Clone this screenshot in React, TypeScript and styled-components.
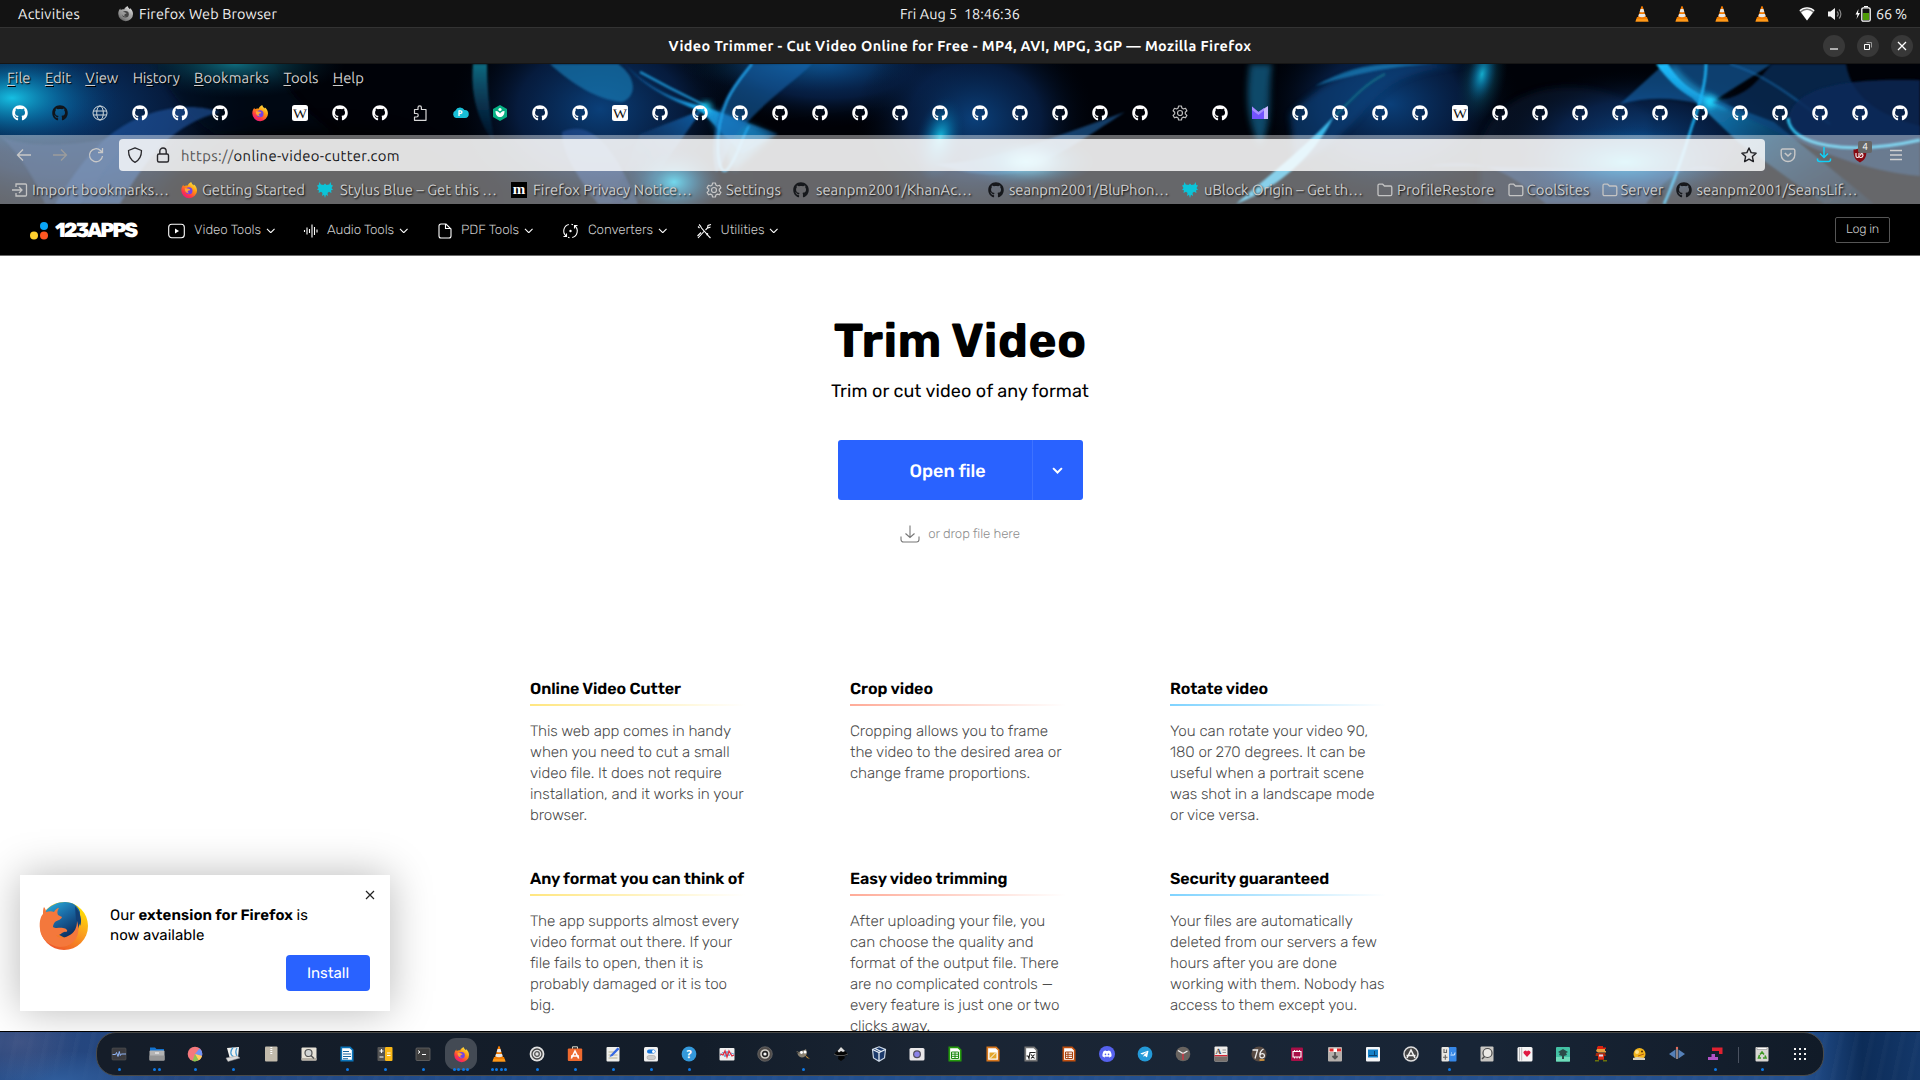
import React, { ReactNode, useLayoutEffect, useRef, useState } from 'react';
import styled, { createGlobalStyle } from 'styled-components';
import { FaGithub, FaDiscord, FaTelegramPlane } from 'react-icons/fa';

const ui = '"Ubuntu", "Open Sans", "Noto Sans", sans-serif';
const web = '"Rubik", "Inter", "Roboto", sans-serif';

const Global = createGlobalStyle`
  * { box-sizing: border-box; }
  body { margin: 0; overflow: hidden; background: #fff; text-rendering: geometricPrecision; }
  h1, h2, p { margin: 0; }
  svg { display: block; flex: none; }
`;

/* ---------- text spread to a known measure ---------- */
const Run = styled.span`
  display: inline-block;
  flex: none;
  white-space: pre;
`;

function Fit({ w, children }: { w: number; children: ReactNode }) {
  const ref = useRef<HTMLSpanElement>(null);
  const [spacing, setSpacing] = useState(0);
  useLayoutEffect(() => {
    const el = ref.current;
    if (!el) return;
    el.style.letterSpacing = '0px';
    const natural = el.getBoundingClientRect().width;
    const value = (w - natural) / (el.textContent || ' ').length;
    el.style.letterSpacing = value + 'px';
    setSpacing(value);
  }, [w]);
  return <Run ref={ref} style={{ letterSpacing: spacing }}>{children}</Run>;
}

/* ---------- shared icons ---------- */
const Svg = styled.svg.attrs({ fill: 'none' })<{ $s?: number }>`
  width: ${(p) => p.$s ?? 16}px;
  height: ${(p) => p.$s ?? 16}px;
  overflow: visible;
`;

const Firefox = ({ s = 16, mono }: { s?: number; mono?: boolean }) => (
  <Svg viewBox="0 0 16 16" $s={s}>
    <defs>
      <linearGradient id={mono ? 'fxm' : 'fxc'} x1="0.85" y1="0" x2="0.2" y2="1">
        <stop offset="0" stopColor={mono ? '#eee' : '#fff44f'} />
        <stop offset="0.4" stopColor={mono ? '#aaa' : '#ff980e'} />
        <stop offset="0.75" stopColor={mono ? '#888' : '#ff3647'} />
        <stop offset="1" stopColor={mono ? '#555' : '#e31587'} />
      </linearGradient>
    </defs>
    <path d="M10.2 0c.3 1.600 1.500 2.300 2.500 3.400.2-.5.1-.9 0-1.200C14.800 3.900 16 6 16 8.400A7.800 7.600 0 0 1 .3 8.600C.2 6 1.200 4 2.500 2.700c0 .7.100 1.200.4 1.500C4 3.500 5.500 3.300 6.600 3.700 7.200 2 8.600.8 10.200 0z" fill={mono ? 'url(#fxm)' : 'url(#fxc)'} />
    <circle cx="8" cy="8.800" r="3.500" fill={mono ? '#444' : '#7542e5'} />
    <path d="M3.800 6.500c1.400-.7 2.800-.1 3.900.3 1 .4 1.600.5 1.500 1C9 8.500 7.800 8.400 7 9c-.8.700-.1 1.900 1.400 1.900-2 1-4.800-.8-4.600-4.400z" fill={mono ? '#999' : '#ffa436'} />
  </Svg>
);

const Vlc = ({ s = 16 }: { s?: number }) => (
  <Svg viewBox="0 0 16 16" $s={s}>
    <path d="M3 11h10l1.500 4.600h-13z" fill="#f08000" />
    <path d="M2.400 13.200h11.200l.9 2.400h-13z" fill="#ff9a1a" />
    <path d="M7.300.2h1.400l3.300 11.200c-2 1.700-6 1.700-8 0z" fill="#f27a00" />
    <path d="M6.600 2.900h2.800l.9 2.900c-1.300.7-3.300.7-4.600 0zM5 8h6l.7 2.300c-2 1.300-5.400 1.300-7.400 0z" fill="#e8e8e8" />
  </Svg>
);

const Gear = ({ c = '#c8c8c8' }: { c?: string }) => (
  <Svg viewBox="0 0 16 16" stroke={c} strokeWidth="1.200">
    <path strokeLinejoin="round" d="M6.600 1h2.800l.5 2.100 1.500.9 2.100-.7 1.400 2.400-1.600 1.500v1.700l1.600 1.500-1.400 2.400-2.100-.7-1.500.9L9.400 15H6.600l-.5-2-1.500-.9-2.100.7-1.400-2.400 1.600-1.500V7.200L1.100 5.700l1.400-2.400 2.100.7 1.500-.9z" />
    <circle cx="8" cy="8" r="2.500" />
  </Svg>
);

const Wiki = () => (
  <Svg viewBox="0 0 16 16">
    <rect width="16" height="16" rx="2.500" fill="#fff" />
    <text x="8" y="12.500" textAnchor="middle" fontFamily="Liberation Serif, serif" fontSize="13" fill="#111" textLength="14" lengthAdjust="spacingAndGlyphs">W</text>
  </Svg>
);

const Splat = () => (
  <Svg viewBox="0 0 16 16">
    <path d="M2.500 0l1.300 2.500L6.500 3 8 1.500 9.500 3l2.700-.5L13.500 0l.8 3L16 3.500 14.500 6l1.500 2-2 .3.500 2.700-2.500-1.200L10.500 11l.5 3-2-1.200L8 16l-1-3.200L5 14l.5-3L4 9.800 1.500 11 2 8.300 0 8l1.500-2L0 3.500 1.700 3z" fill="#0cc4d8" />
  </Svg>
);

const Folder = () => (
  <Svg viewBox="0 0 16 16" stroke="#c4c4c4" strokeWidth="1.300">
    <path d="M1 3.500A1.300 1.300 0 0 1 2.300 2.200h3.400L7.500 4h6a1.300 1.300 0 0 1 1.300 1.300v7a1.300 1.300 0 0 1-1.300 1.300H2.300A1.300 1.300 0 0 1 1 12.300z" />
  </Svg>
);

/* ---------- system bar ---------- */
const Screen = styled.div`
  width: 1920px;
  height: 1080px;
  display: flex;
  flex-direction: column;
  overflow: hidden;
  font-family: ${ui};
`;

const SystemBar = styled.header`
  display: grid;
  grid-template-columns: 1fr auto 1fr;
  align-items: center;
  height: 27px;
  background: #131313;
  color: #f0f0f0;
  font-size: 14.400px;
  line-height: 26px;
`;

const SystemLeft = styled.div`
  display: flex;
  align-items: center;
  padding-left: 18px;
`;

const AppMenu = styled.div`
  display: flex;
  align-items: center;
  gap: 6px;
  margin-left: 38px;
`;

const SystemRight = styled.div`
  display: flex;
  align-items: center;
  justify-content: flex-end;
  padding-right: 13px;
`;

const Cones = styled.div`
  display: flex;
  gap: 24px;
  margin-right: 29px;
`;

const StatusIcons = styled.div`
  display: flex;
  align-items: center;
  gap: 12px;
  margin-right: 5px;
`;

const TitleBar = styled.div`
  display: grid;
  grid-template-columns: 1fr auto 1fr;
  align-items: center;
  height: 37px;
  background: #222;
  border-top: 1px solid #333;
  border-bottom: 1px solid #161616;
  color: #fff;
  font-size: 14.400px;
  font-weight: 700;
`;

const WindowButtons = styled.div`
  grid-column: 3;
  display: flex;
  justify-content: flex-end;
  gap: 12px;
  padding-right: 7px;
`;

const WindowButton = styled.div`
  display: grid;
  place-items: center;
  width: 22px;
  height: 22px;
  border-radius: 50%;
  background: #383838;
`;

const Title = styled.div`
  grid-column: 2;
`;

/* ---------- browser chrome ---------- */
const Chrome = styled.div`
  position: relative;
  height: 140px;
  display: flex;
  flex-direction: column;
  background: #000208;
  color: #cfcfcf;
  overflow: hidden;
`;

const Art = styled.svg`
  position: absolute;
  inset: 0;
  width: 1920px;
  height: 140px;
`;

const MenuRow = styled.nav`
  position: relative;
  display: flex;
  align-items: center;
  gap: 14.400px;
  height: 27px;
  padding-left: 7px;
  font-size: 14.800px;
  text-shadow: 1px 1px 1px #000;
  line-height: 20px;

  u { text-underline-offset: 2px; }
`;

const TabRow = styled.div`
  position: relative;
  display: flex;
  height: 44px;
`;

const Tab = styled.div<{ $dark?: boolean }>`
  display: grid;
  place-items: center;
  width: 40px;
  height: 44px;
  color: ${(p) => (p.$dark ? '#10141a' : '#fff')};
`;

const Toolbars = styled.div`
  position: relative;
  display: flex;
  flex-direction: column;
  height: 69px;
  background: rgba(255, 255, 255, 0.4);
`;

const AddressRow = styled.div`
  display: flex;
  align-items: center;
  height: 40px;
  padding: 0 16px;
`;

const NavButtons = styled.div`
  display: flex;
  align-items: center;
  gap: 20px;
  width: 103px;
`;

const UrlField = styled.div`
  display: flex;
  align-items: center;
  width: 1646px;
  height: 32px;
  padding: 0 8px;
  border-radius: 4px;
  background: rgba(255, 255, 255, 0.8);
  color: #16161a;
  font-size: 14.800px;
`;

const UrlText = styled.div`
  margin-left: 10px;
  flex: 1;

  span span { color: #555; }
`;

const Gap = styled.span<{ $w: number }>`
  flex: none;
  width: ${(p) => p.$w}px;
`;

const Actions = styled.div`
  display: flex;
  align-items: center;
  gap: 20px;
  margin-left: 15px;
`;

const Badged = styled.div`
  position: relative;
`;

const Badge = styled.span`
  position: absolute;
  left: 6px;
  top: -6px;
  width: 14px;
  height: 12px;
  border-radius: 2px;
  background: #666;
  color: #fff;
  font-size: 10px;
  line-height: 12px;
  text-align: center;
`;

const Bookmarks = styled.div`
  display: flex;
  align-items: center;
  height: 29px;
  font-size: 14.800px;
  color: #d0d0d0;
  text-shadow: 1px 1px 2px #000;
  line-height: 28px;
`;

const Bookmark = styled.div<{ $ml: number; $gap: number }>`
  display: flex;
  align-items: center;
  gap: ${(p) => p.$gap}px;
  margin-left: ${(p) => p.$ml}px;
`;

const InkMark = styled(FaGithub)`
  color: #16181c;
`;

/* ---------- web page ---------- */
const Page = styled.main`
  position: relative;
  height: 827px;
  background: #fff;
  overflow: hidden;
  font-family: ${web};
`;

const SiteNav = styled.nav`
  display: flex;
  align-items: center;
  height: 52px;
  padding: 0 30px;
  background: #000;
  border-bottom: 1px solid #6a6a6a;
  color: #ccc;
  font-size: 13.300px;
  font-weight: 300;
`;

const Logo = styled.div`
  display: flex;
  align-items: center;
  gap: 7px;
  width: 138px;
  padding-top: 2px;
  color: #fff;
  font-size: 20.500px;
  font-weight: 800;
`;

const NavItem = styled.div<{ $mr: number }>`
  display: flex;
  align-items: center;
  padding-top: 2px;
  margin-right: ${(p) => p.$mr}px;
`;

const LogIn = styled.div`
  display: grid;
  place-items: center;
  width: 55px;
  height: 26px;
  margin-left: auto;
  border: 1px solid #555;
  border-radius: 2px;
  font-size: 12.500px;
`;

const Hero = styled.section`
  display: flex;
  flex-direction: column;
  align-items: center;
  padding-top: 56px;
`;

const HeroTitle = styled.h1`
  font-size: 48px;
  line-height: 58px;
  font-weight: 700;
  color: #000;
`;

const HeroSub = styled.p`
  margin-top: 9px;
  font-size: 18px;
  line-height: 24px;
  color: #000;
`;

const OpenButton = styled.div`
  display: flex;
  width: 245px;
  height: 60px;
  margin-top: 37px;
  border-radius: 3px;
  background: #2962ff;
  color: #fff;
  font-size: 18px;
  font-weight: 500;
`;

const OpenLabel = styled.div`
  display: flex;
  align-items: center;
  width: 195px;
  padding: 2px 0 0 72px;
  border-right: 1px solid #3e72ff;
`;

const OpenMore = styled.div`
  flex: 1;
  display: grid;
  place-items: center;
  padding-top: 1px;
`;

const Drop = styled.div`
  display: flex;
  align-items: center;
  gap: 8px;
  height: 20px;
  margin-top: 24px;
  color: #8e8e8e;
  font-size: 13.200px;
  font-weight: 300;
`;

const Features = styled.section`
  display: grid;
  grid-template-columns: repeat(3, 320px);
  grid-auto-rows: 189.500px;
  margin: 134px 0 0 530px;
`;

const Feature = styled.article`
  width: 220px;
`;

const FeatureTitle = styled.h2<{ $c: string }>`
  height: 28px;
  font-size: 16px;
  line-height: 21px;
  font-weight: 600;
  color: #000;
  background: linear-gradient(90deg, ${(p) => p.$c}, #fff 216px) left bottom / 216px 2px no-repeat;
`;

const Lines = styled.p`
  display: flex;
  flex-direction: column;
  align-items: flex-start;
  margin-top: 15.400px;
  color: #4c4c4c;
  font-size: 15.200px;
  line-height: 21px;
  font-weight: 300;
`;

const Popup = styled.aside`
  position: absolute;
  left: 20px;
  top: 671px;
  display: flex;
  width: 370px;
  height: 136px;
  padding: 27px 20px 20px;
  background: #fff;
  box-shadow: 0 0 40px rgba(0, 0, 0, 0.28);
`;

const PopupBody = styled.div`
  display: flex;
  flex-direction: column;
  flex: 1;
  margin-left: 22px;
  padding-top: 3px;
  font-size: 15px;
  line-height: 20px;
  color: #000;

  b { font-weight: 600; }
`;

const Phrase = styled.div`
  display: flex;
  gap: 3.500px;
`;

const Install = styled.div`
  display: grid;
  place-items: center;
  align-self: flex-end;
  width: 84px;
  height: 36px;
  margin-top: 10px;
  border-radius: 4px;
  background: #2962ff;
  color: #fff;
  font-weight: 400;
`;

const PopupClose = styled.div`
  position: absolute;
  right: 15px;
  top: 15px;
`;

/* ---------- dock ---------- */
const Desktop = styled.footer`
  height: 49px;
  padding-left: 96px;
  border-top: 1px solid #000;
  background:
    radial-gradient(ellipse 60px 40px at 20px 10px, #55608c88, transparent),
    radial-gradient(ellipse 120px 30px at 60px 49px, #2f5d9c, transparent),
    repeating-linear-gradient(102deg, #ffffff05 0 3px, transparent 6px 15px),
    linear-gradient(90deg, #26457c, #1f4e8f 30%, #23508f 60%, #24508e 94%, #0c2c58 97%, #14386a);
`;

const Dock = styled.div`
  display: flex;
  align-items: flex-start;
  width: 1728px;
  height: 44px;
  padding: 0 3px;
  border: 1px solid #4a4a48;
  border-radius: 20px;
  background: linear-gradient(90deg, #151d29, #131d2a 35%, #1a2534 50%, #182536 80%, #111b28);
`;

const DockItem = styled.div<{ $on?: boolean }>`
  display: flex;
  flex-direction: column;
  align-items: center;
  flex: none;
  width: 38px;
  height: 42px;

  & > div:first-child {
    display: grid;
    place-items: center;
    width: 32px;
    height: 32px;
    margin-top: 5px;
    border-radius: 11px;
    background: ${(p) => (p.$on ? '#434a54' : 'transparent')};
  }
`;

const Dots = styled.div`
  display: flex;
  gap: 1.500px;
  margin-top: -2px;

  i {
    width: 3px;
    height: 3px;
    border-radius: 50%;
    background: #0d78e6;
  }
`;

const Divider = styled.div`
  width: 1px;
  height: 16px;
  margin: 14px 4px 0;
  background: #4a5260;
`;

const TileText = ({ x = 8, y = 12, size = 10, c = '#fff', children }: { x?: number; y?: number; size?: number; c?: string; children: string }) => (
  <text x={x} y={y} fontSize={size} fontWeight="700" textAnchor="middle" fill={c} fontFamily="Open Sans, sans-serif">{children}</text>
);

const sheet = (edge: string, inner: ReactNode) => (
  <>
    <path d="M2.300 1.300h8.700l2.700 2.700v10.700H2.300z" fill="#fff" stroke={edge} strokeWidth="1.700" />
    {inner}
  </>
);

const dock: { n?: number; on?: boolean; art: ReactNode }[] = [
  { n: 1, art: <><rect x="1" y="2" width="14" height="12" rx="1" fill="#3b3b3f" stroke="#555" strokeWidth=".6" /><path d="M1.500 8.500h3l1-2 1.500 4 1.300-5 1 4 1-1.500H15" stroke="#8fb4f5" /></> },
  { n: 2, art: <><path d="M1 3V1.500h5L7.500 3H15v3H1z" fill="#1473cf" /><rect x=".5" y="4.500" width="15" height="10" rx="1" fill="#b4b4b4" /><path d="M.5 9.500h15v5H.5z" fill="#969696" /><path d="M6 7h4" stroke="#fff" /></> },
  { n: 1, art: <><circle cx="8" cy="8" r="7.300" fill="#f5797e" /><path d="M8 8l4.500-5.500A7.300 7.300 0 0 1 15 10z" fill="#7295f5" /><path d="M8 8l7 2a7 7 0 0 1-3.500 4.300z" fill="#ffd25e" /><path d="M8 8l3.500 6.300A7 7 0 0 1 5.500 15z" fill="#8cc751" /></> },
  { n: 1, art: <><path d="M2 2l12-1-1 11-8 1z" fill="#f3f3ef" /><path d="M8 1.500C5 5 5 9 8.500 10.500M12 2c-2 3-1 6 0 8" stroke="#4a9bd1" strokeWidth="1.300" /><path d="M1 12l11-2 3 2-12 3.500z" fill="#ddd" stroke="#999" strokeWidth=".5" /></> },
  { art: <><rect x="2" y=".5" width="12.500" height="15" rx="1" fill="#c2bbac" /><path d="M8.300 1v8" stroke="#fff" strokeWidth="2" strokeDasharray="1 1" /></> },
  { art: <><rect x=".5" y="1.500" width="15" height="13" rx="1" fill="#e7e2d7" /><path d="M.5 12h15v2.500H.5z" fill="#b7b1a6" /><circle cx="7.500" cy="7" r="3.500" fill="#d2d5d5" stroke="#555" strokeWidth="1.200" /><path d="M10 9.500l3 3" stroke="#555" strokeWidth="1.500" /></> },
  { n: 1, art: sheet('#0b74ba', <path d="M4 5.500h6M4 8h8M4 10.500h8M4 12.800h5" stroke="#14649f" strokeWidth="1.100" />) },
  { n: 1, art: <><rect x=".5" y="1" width="8" height="14" rx="1" fill="#555" /><rect x="8" y="1" width="7.500" height="14" rx="1" fill="#fbb917" /><path d="M2.500 5h4M4.500 3v4M2.500 11h4M10 7h3.500M10 9.500h3.500" stroke="#fff" strokeWidth="1.100" /></> },
  { n: 1, art: <><rect x="1" y="2" width="14" height="12.500" rx="1" fill="#3e3e3e" stroke="#666" strokeWidth=".8" /><path d="M3 4.500l2 1.500-2 1.500M7 8.500h4" stroke="#fff" /></> },
  { n: 4, on: true, art: null },
  { n: 4, art: null },
  { n: 1, art: <><circle cx="8" cy="8" r="7.400" fill="#e2e2e2" /><circle cx="8" cy="8" r="5" stroke="#444" strokeWidth="1.300" /><circle cx="8" cy="8" r="2.300" stroke="#555" strokeWidth="1.300" /></> },
  { n: 1, art: <><path d="M5.500 3V.8h5V3" stroke="#ddc" /><rect x=".8" y="2.500" width="14.400" height="12.500" rx="1" fill="#ee6a2f" /><path d="M4.300 12.500L8 5l3.700 7.500M4 10h8" stroke="#fff" strokeWidth="1.600" /></> },
  { n: 1, art: <><rect x="1.500" y="1" width="13" height="14.500" rx="1" fill="#efefec" /><path d="M3.500 6h6M3.500 9h9M3.500 12h9" stroke="#b9b293" /><path d="M5.500 9l7-7.500L14.500 3 7.500 10l-3 1z" fill="#3467e3" /></> },
  { n: 1, art: <><rect x="1" y="1" width="14" height="14.500" rx="1.500" fill="#f1f1f1" /><rect x="4" y="3.500" width="8.500" height="4" rx="2" fill="#1777dc" /><circle cx="10.500" cy="5.500" r="1.500" fill="#fff" /><rect x="4" y="9.500" width="8.500" height="4" rx="2" fill="#ccc" stroke="#999" strokeWidth=".5" /></> },
  { n: 1, art: <><circle cx="8" cy="8" r="7.400" fill="#3499db" /><TileText y={12} size={11}>?</TileText></> },
  { art: <><rect x=".5" y="2" width="15" height="12.500" rx="1" fill="#efefef" /><path d="M1 10l3-4 2 5 2-6 2 5 2-3 3 1" stroke="#6ba7d8" /><path d="M1 8l3 1 2-4 2 6 2-6 3 5 2-1" stroke="#df2b41" strokeWidth="1.300" /></> },
  { art: <><circle cx="8" cy="8" r="7.300" fill="#4f4b49" stroke="#777" strokeWidth=".6" /><circle cx="8" cy="8" r="4" fill="#222" stroke="#d2cfc8" strokeWidth="1.600" /><circle cx="8" cy="8" r="1.600" fill="#f5f5f5" /></> },
  { n: 1, art: <><path d="M1.500 5L4 6c2-2 5-1 7-3l1 4c-1 5-7 6-9 2z" fill="#877f70" /><path d="M9 8l6 5-3-1z" fill="#c78e33" /><circle cx="6.500" cy="6.500" r="1.400" fill="#fff" /><circle cx="10" cy="6" r="1.500" fill="#fff" /><path d="M.8 6h2.500v2z" fill="#333" /></> },
  { art: <><path d="M8 1l7 7-2 2-2 .5L12 12l-4 3-3-2 .5-2.500L1 8z" fill="#050505" /><path d="M8 1l4 4-2 1-2-1-2 1.500L4.500 5z" fill="#ddd" /><path d="M1 8l3 1.500h7L15 8" stroke="#777" strokeWidth=".7" /></> },
  { art: <><path d="M8 .8l6.500 2.700-1 8.500L8 15.300 2.500 12l-1-8.500z" fill="#1c3a6b" stroke="#cad6e5" strokeWidth="1.200" /><path d="M1.500 3.500L8 6.500l6.500-3M8 6.500v8.500M4 2.500l6 3" stroke="#e7eef5" strokeWidth="1.300" /></> },
  { art: <><rect x=".5" y="2" width="15" height="12.500" rx="1.500" fill="#e9e7e9" /><circle cx="8" cy="8.300" r="4" fill="#55505f" /><circle cx="8" cy="8.300" r="2.700" fill="#8c83e8" /></> },
  { art: sheet('#249a0b', <path d="M4.500 6h7v6.500h-7zM4.500 8.200h7M4.500 10.300h7M8 6v6.500" stroke="#1c8a10" strokeWidth="1" />) },
  { art: sheet('#d7761c', <><rect x="4.500" y="6.500" width="7" height="6" fill="#e3a62a" /><path d="M5 12.500l6-6" stroke="#fff" /></>) },
  { art: sheet('#777', <path d="M3.500 10H5l1 2.500 1-6h5.500M8 8.500l3.500 4M11.500 8.500L8 12.500" stroke="#222" strokeWidth="1.100" />) },
  { art: sheet('#c2500f', <path d="M4.500 6h7v6.500h-7zM5 8.300h6.500M5 10.300h6.500M7 6v6" stroke="#a84411" strokeWidth="1" />) },
  { art: <circle cx="8" cy="8" r="8" fill="#5662ee" /> },
  { art: <circle cx="8" cy="8" r="7.400" fill="#249ad8" /> },
  { art: <><circle cx="8" cy="8" r="7.300" fill="#68635f" /><path d="M3 4.500l5 3 4.500-2.500" stroke="#f0f0f0" strokeWidth="1.400" /><path d="M8 7.500V14" stroke="#dc3242" strokeWidth="1.300" /></> },
  { art: <><rect x="1.500" y=".5" width="13" height="15" rx="1" fill="#efedea" /><text x="5.500" y="8" fontFamily="Liberation Serif, serif" fontSize="8" fontWeight="700" textAnchor="middle" fill="#444">A</text><path d="M9.500 4H13M9.500 6.500H13" stroke="#999" /><path d="M1.500 9h13v1.500h-13z" fill="#d32737" /><path d="M1.500 10.500h13v5h-13z" fill="#77706c" /></> },
  { art: <><circle cx="8" cy="8" r="7.600" fill="#574a43" /><path d="M1.500 4h5L4 12.500M12.500 3C9.500 4.500 8.300 8 9 10.500c.8 2.300 4.500 1.600 4.500-.8S10 6.800 8.800 9.300" stroke="#eee" strokeWidth="1.300" /><path d="M8.500 14h5" stroke="#e8a13a" strokeWidth="1.500" /></> },
  { art: <><rect x="2" y="1.500" width="12" height="13.500" rx="1" fill="#a80f47" /><path d="M4 5.500h8v5.500H4z" stroke="#fff" strokeWidth="1.100" /><path d="M5.500 4v1.500M8 4v1.500M10.500 4v1.500M5.500 11v1.500M8 11v1.500M10.500 11v1.500" stroke="#fff" strokeWidth=".9" /></> },
  { art: <><rect x="1" y="1" width="14" height="14.500" rx="1" fill="#b5b0ac" /><path d="M2 2.500h12V6H2z" fill="#fff" /><path d="M2.500 2.500h4v3h-4zM10 2.500h4v3h-4z" fill="#e02b2b" /><path d="M8 6v6M5.500 10L8 12.500 10.500 10" stroke="#555" strokeWidth="1.800" /></> },
  { art: <><rect x="1" y="1" width="14" height="14.500" rx="1" fill="#f4f6f8" /><rect x="3" y="3.500" width="10" height="8" fill="#1280c8" /><path d="M4 9.500h8M9.500 5v5" stroke="#09416e" /></> },
  { art: <><circle cx="8" cy="8" r="7" fill="#444" stroke="#dedede" strokeWidth="1.500" /><path d="M4 12L8 4l4 8M3.500 9.500h9" stroke="#f1f1f1" strokeWidth="1.600" /></> },
  { n: 1, art: <><rect x=".5" y="1" width="7.500" height="14.500" rx="1" fill="#e9e7e2" /><rect x="8" y="1" width="7.500" height="14.500" rx="1" fill="#3788e7" /><path d="M3 3v3.500h2.500V3.500M4.300 8.800v5M2 11.300h4.500" stroke="#666" strokeWidth="1.100" /><path d="M9.500 9h4l.5-2.500M10 7h1" stroke="#d9ecff" /></> },
  { art: <><rect x="1.500" y=".5" width="13" height="15" rx="1" fill="#c9c7c3" /><circle cx="8.500" cy="7" r="4.500" fill="#eceae6" stroke="#4c4c4c" strokeWidth="1.200" /><path d="M5.500 10.500L3 13" stroke="#4c4c4c" strokeWidth="1.400" /></> },
  { art: <><rect x=".5" y="1" width="15" height="14.500" rx="1.500" fill="#f6f6f6" /><path d="M2.500 1.500v13M4.700 1.500v13" stroke="#aaa" strokeWidth=".8" /><path d="M10 11L6.800 7.500A1.800 1.800 0 0 1 10 5.500a1.800 1.800 0 0 1 3.200 2z" fill="#e01b43" /></> },
  { art: <><rect x="1" y="1" width="14" height="14.500" rx="1" fill="#43c1a4" /><path d="M1 11h14v4.500H1z" fill="#6fdcba" /><path d="M3 6l5-3 5 3-2 1 1 2-3 1v3H7v-3L4 9l1-2z" fill="#2b4b48" /></> },
  { art: <><path d="M5 0h5v1.500h3V3H4V1.500z" fill="#dd2210" /><path d="M4 3h8v2h1v1.500H5L3 5z" fill="#e7a040" /><path d="M3 7h9l1 3h-2v4H5v-4H2.500z" fill="#a8290f" /><path d="M5 9h6v4H5z" fill="#df2c16" /><path d="M6 8.500h4v2H6z" fill="#ddd9f0" /><path d="M2 14h4v1.500H2zM10 14h4v1.500h-4z" fill="#69730d" /></> },
  { art: <><circle cx="8.500" cy="8" r="6" fill="#f1b31c" /><circle cx="6" cy="6" r="2" fill="#ffe08a" /><path d="M7 10l6-2" stroke="#b45d10" /><path d="M2 12l4-1 8 1v2H2z" fill="#d6cfbf" /><circle cx="11" cy="5.500" r="1" fill="#553105" /></> },
  { art: <><path d="M0 8l6.500-4.500v9zM16 8L9.500 3.500v9z" fill="#5580b8" /><path d="M8 2v11" stroke="#b8a6a2" strokeWidth="1.500" /><circle cx="8" cy="2" r="1.200" fill="#e66c5c" /></> },
  { n: 1, art: <><path d="M5 1.500h10.500V8H12V5H5z" fill="#df2130" /><path d="M4.500 8H8v3h3v3H1v-3h3.500z" fill="#b252c6" /></> },
];

function DockGlyph({ index, art }: { index: number; art: ReactNode }) {
  if (index === 9) return <Firefox s={15} />;
  if (index === 10) return <Vlc s={16} />;
  return (
    <Svg viewBox="0 0 16 16" $s={16}>
      {art}
      {index === 26 && <FaDiscord x={3} y={3} size={10} color="#fff" />}
      {index === 27 && <FaTelegramPlane x={3} y={3.500} size={9} color="#fff" />}
    </Svg>
  );
}

/* ---------- theme artwork ---------- */
const ThemeArt = () => (
  <Art viewBox="0 0 1920 140" fill="none">
    <defs>
      <radialGradient id="cy"><stop offset="0" stopColor="#16bfe2" /><stop offset=".4" stopColor="#0878ac" stopOpacity=".7" /><stop offset="1" stopColor="#032a5c" stopOpacity="0" /></radialGradient>
      <radialGradient id="bl"><stop offset="0" stopColor="#0d4f96" stopOpacity=".8" /><stop offset=".55" stopColor="#0a2c60" stopOpacity=".6" /><stop offset="1" stopColor="#000814" stopOpacity="0" /></radialGradient>
      <radialGradient id="tl"><stop offset="0" stopColor="#127c8f" stopOpacity=".85" /><stop offset="1" stopColor="#03263c" stopOpacity="0" /></radialGradient>
      <linearGradient id="rayR" x1="0" y1="0" x2="1" y2="1"><stop offset="0" stopColor="#0c5098" stopOpacity=".35" /><stop offset=".5" stopColor="#1cb0f8" stopOpacity=".95" /><stop offset="1" stopColor="#1a62b5" stopOpacity=".25" /></linearGradient>
      <linearGradient id="beam" x1="0" y1="0" x2="1" y2="1"><stop offset="0" stopColor="#1cc0ff" /><stop offset=".5" stopColor="#1787cf" stopOpacity=".5" /><stop offset="1" stopColor="#1a62b5" stopOpacity=".1" /></linearGradient>
      <linearGradient id="wingL" x1="1" y1=".2" x2="0" y2="1"><stop offset="0" stopColor="#1669b8" stopOpacity=".75" /><stop offset="1" stopColor="#07162e" stopOpacity=".1" /></linearGradient>
      <linearGradient id="rib" x1="0" y1="0" x2="0" y2="1"><stop offset="0" stopColor="#13778e" stopOpacity=".9" /><stop offset="1" stopColor="#0c3f78" stopOpacity=".1" /></linearGradient>
      <filter id="f1" x="-20%" y="-20%" width="140%" height="140%"><feGaussianBlur stdDeviation=".8" /></filter>
      <filter id="f3" x="-50%" y="-50%" width="200%" height="200%"><feGaussianBlur stdDeviation="3" /></filter>
      <filter id="f8" x="-150%" y="-150%" width="400%" height="400%"><feGaussianBlur stdDeviation="8" /></filter>
    </defs>

    {/* left glow and its dark folds */}
    <ellipse cx="60" cy="45" rx="200" ry="120" fill="url(#bl)" />
    <ellipse cx="12" cy="34" rx="110" ry="55" fill="url(#cy)" />
    <path d="M155 0c15 28 32 52 60 70h120c-30-22-50-45-60-70z" fill="#030c1a" opacity=".55" filter="url(#f3)" />
    <ellipse cx="235" cy="0" rx="110" ry="34" fill="url(#tl)" />
    <path d="M55 140c25-40 50-78 100-92 30-8 50-5 65 0-45 12-70 40-100 92z" fill="#2358a5" opacity=".6" filter="url(#f1)" />
    <path d="M0 72c25 12 75 12 130-2-20 30-35 50-50 70H45C35 115 20 90 0 72z" fill="#1b437c" opacity=".5" filter="url(#f1)" />
    <path d="M160 140c10-60 110-82 180-78 60 2 120 20 150 78z" fill="#000" opacity=".75" filter="url(#f8)" />

    {/* vertical ribbon and the first crossing */}
    <ellipse cx="600" cy="45" rx="150" ry="110" fill="url(#bl)" />
    <path d="M473 0h14c0 30 3 52 8 80-15-20-25-45-22-80z" fill="url(#rib)" filter="url(#f1)" />
    <path d="M550 0h68c18 12 20 32 4 38-25-2-50-18-72-38z" fill="#1877b0" opacity=".7" filter="url(#f1)" />
    <path d="M562 68c26-12 50 8 76 72h-40c-22-30-36-50-36-72z" fill="#3768bd" opacity=".4" filter="url(#f1)" />
    <ellipse cx="800" cy="0" rx="120" ry="28" fill="url(#tl)" />
    <ellipse cx="830" cy="0" rx="150" ry="62" fill="url(#bl)" />
    <path d="M640 70l62-24-66 94h-25z" fill="url(#wingL)" filter="url(#f1)" />
    <path d="M625 0c25 25 50 36 78 42l75 28-36 20-40-42C665 34 640 20 625 0z" fill="url(#rayR)" filter="url(#f1)" />
    <path d="M640 8l30 16 36 18" stroke="#22b0f5" strokeWidth="2.500" opacity=".8" filter="url(#f1)" />
    <path d="M706 42c30 14 55 22 68 30l-40 34c-10-20-20-45-28-64z" fill="#1a9be0" opacity=".55" filter="url(#f3)" />
    <path d="M750 0h62c-20 20-50 38-80 76-8 18-10 28-16 32-6-18-2-50 8-70 6-14 16-26 26-38z" fill="#1469b4" opacity=".55" filter="url(#f1)" />
    <path d="M752 0c-14 18-36 40-34 88 1 14 4 22 9 18 12-14 14-32 22-44" stroke="#22a8ee" strokeWidth="2" filter="url(#f1)" />
    <circle cx="706" cy="43" r="5" fill="#20d8ff" filter="url(#f3)" />
    <ellipse cx="674" cy="118" rx="48" ry="34" fill="url(#cy)" />
    <path d="M770 72c50 0 110-20 170-10l-20 60H770z" fill="#000" opacity=".35" filter="url(#f8)" />

    {/* centre glow */}
    <ellipse cx="975" cy="55" rx="120" ry="100" fill="url(#bl)" />
    <ellipse cx="940" cy="74" rx="24" ry="44" fill="url(#cy)" transform="rotate(14 940 74)" />
    <path d="M935 100c60-2 110-24 190-52-40 26-75 50-105 60-30 6-60 0-85-8z" fill="#2770b8" opacity=".55" filter="url(#f1)" />
    <ellipse cx="1025" cy="98" rx="70" ry="26" fill="url(#cy)" />
    <ellipse cx="1030" cy="96" rx="22" ry="5" fill="#9be9ff" filter="url(#f8)" />

    {/* right ribbon and wing */}
    <path d="M1250 0h22c-4 35 2 58-12 82-14-26-14-54-10-82z" fill="#126f9e" opacity=".65" filter="url(#f3)" />
    <ellipse cx="1390" cy="40" rx="130" ry="95" fill="url(#bl)" />
    <path d="M1290 50c30-30 65-48 105-50h75c-45 4-76 12-100 40-22 25-40 45-75 60z" fill="#0f4480" opacity=".6" filter="url(#f3)" />
    <path d="M1315 22c25-14 48-22 80-22h55c-50 0-88 8-135 22z" fill="#1d90cd" opacity=".6" filter="url(#f1)" />
    <path d="M1236 140c24-22 58-46 98-88-18 38-55 72-98 88z" fill="#40c4f4" opacity=".9" filter="url(#f1)" />
    <path d="M1335 52c18-18 30-32 50-42" stroke="#136a86" strokeWidth="2" filter="url(#f1)" />
    <ellipse cx="1482" cy="14" rx="24" ry="46" fill="url(#tl)" transform="rotate(14 1482 14)" />
    <ellipse cx="1482" cy="10" rx="14" ry="30" fill="url(#cy)" opacity=".8" transform="rotate(14 1482 10)" />
    <path d="M1480 80c15-55 100-80 170-30v90H1480z" fill="#071a36" opacity=".55" filter="url(#f3)" />

    {/* second crossing */}
    <ellipse cx="1640" cy="75" rx="150" ry="70" fill="url(#bl)" />
    <ellipse cx="1625" cy="98" rx="105" ry="38" fill="url(#cy)" />
    <path d="M1664 0l-44 40c30-8 56-6 80 0l12-2 60-38z" fill="#1469b4" opacity=".6" filter="url(#f1)" />
    <path d="M1668 0c8 12 18 24 36 32l70 26 100 82h-50l-86-62-46-44c-14-8-26-20-36-34z" fill="url(#beam)" filter="url(#f1)" />
    <path d="M1672 4c8 10 20 22 32 27l22 12" stroke="#25c4ff" strokeWidth="5" opacity=".7" filter="url(#f3)" />
    <path d="M1706 0c0 20-6 40-14 62-8 26-16 52-28 78" stroke="#1cb4f5" strokeWidth="2.500" filter="url(#f1)" />
    <circle cx="1710" cy="38" r="6" fill="#22d9ff" filter="url(#f3)" />
    <path d="M1712 38c40-6 46-24 60-38h74c6 36 36 52 74 62v50c-80-8-130-40-208-74z" fill="#113f7c" opacity=".55" filter="url(#f1)" />
    <path d="M1730 0c40 12 70 40 100 60" stroke="#1a6db0" strokeWidth="2" opacity=".6" filter="url(#f1)" />
    <path d="M1788 56c4-34 60-42 132-40v62c-60 16-130 6-132-22z" fill="#0a2a5a" opacity=".8" filter="url(#f1)" />
    <path d="M1788 54c2 28 60 38 132 22" stroke="#2fbdea" strokeWidth="3" filter="url(#f1)" />
    <path d="M1430 102c60-12 90 16 116 38h100c24-34 50-44 76-34" fill="#2c65bb" opacity=".35" filter="url(#f1)" />
  </Art>
);

const menus: [string, string, string, number][] = [
  ['', 'F', 'ile', 23.500], ['', 'E', 'dit', 26], ['', 'V', 'iew', 33], ['Hi', 's', 'tory', 47],
  ['', 'B', 'ookmarks', 75], ['', 'T', 'ools', 35], ['', 'H', 'elp', 31],
];

const tabs: Record<number, ReactNode> = {
  2: <Svg viewBox="0 0 16 16" stroke="#cfd8dc" strokeWidth="1"><circle cx="8" cy="8" r="7" /><ellipse cx="8" cy="8" rx="3.300" ry="7" /><path d="M1.300 6h13.400M1.300 10h13.400" /></Svg>,
  6: <Firefox />,
  7: <Wiki />,
  10: <Svg viewBox="0 0 16 16" stroke="#d8d8d8" strokeWidth="1.200"><path d="M6 4.500V2.500a1.700 1.700 0 0 1 3.400 0v2H14v10.800H2.500V12h2a1.700 1.700 0 0 0 0-3.500h-2v-4z" strokeLinejoin="round" /></Svg>,
  11: <Svg viewBox="0 0 16 16"><path d="M4 13a4 4 0 0 1-.5-7.500 5 5 0 0 1 9-.5A4 4 0 0 1 13 13z" fill="#18bfd6" /><TileText y={11} size={8}>P</TileText></Svg>,
  12: <Svg viewBox="0 0 16 16"><path d="M8 0l7 4v8l-7 4-7-4V4z" fill="#07b084" /><path d="M3.500 6c3 0 4.500 2 4.500 3 0-1 1.500-3 4.500-3 0 4-2 6-4.500 6s-4.500-2-4.500-6z" fill="#fff" /><circle cx="8" cy="4.500" r="1.600" fill="#fff" /></Svg>,
  15: <Wiki />,
  29: <Gear c="#bdbdbd" />,
  31: <Svg viewBox="0 0 16 16"><path d="M0 1.500L6 7l6-3.500V14H0z" fill="#7353ff" /><path d="M0 1.500L6.500 7 12 3v2.500L6.500 10 0 5z" fill="#a48bff" /><path d="M12 3.500L16 1v13h-4z" fill="#c9b8ff" /></Svg>,
  36: <Wiki />,
};

type Mark = { ml: number; gap: number; w: number; text: string; icon: ReactNode };
const marks: Mark[] = [
  { ml: 12, gap: 4, w: 137, text: 'Import bookmarks…', icon: <Svg viewBox="0 0 16 16" stroke="#c4c4c4" strokeWidth="1.300"><path d="M4 5V2h9.500a1 1 0 0 1 1 1v10a1 1 0 0 1-1 1H4v-3M0 8h10M7 5l3 3-3 3" /></Svg> },
  { ml: 12, gap: 5, w: 103, text: 'Getting Started', icon: <Firefox /> },
  { ml: 12, gap: 7, w: 157, text: 'Stylus Blue – Get this …', icon: <Splat /> },
  { ml: 14, gap: 6, w: 159, text: 'Firefox Privacy Notice…', icon: <Svg viewBox="0 0 16 16"><rect width="16" height="16" fill="#000" /><text x="8" y="12" fontSize="15" fontWeight="700" textAnchor="middle" fill="#fff" fontFamily="Liberation Serif, serif">m</text></Svg> },
  { ml: 14, gap: 4, w: 55, text: 'Settings', icon: <Gear /> },
  { ml: 12, gap: 7, w: 156, text: 'seanpm2001/KhanAc…', icon: <InkMark size={16} /> },
  { ml: 16, gap: 5, w: 160, text: 'seanpm2001/BluPhon…', icon: <InkMark size={16} /> },
  { ml: 13, gap: 6, w: 159, text: 'uBlock Origin – Get th…', icon: <Splat /> },
  { ml: 14, gap: 4, w: 97, text: 'ProfileRestore', icon: <Folder /> },
  { ml: 13, gap: 3, w: 63, text: 'CoolSites', icon: <Folder /> },
  { ml: 12, gap: 3, w: 43, text: 'Server', icon: <Folder /> },
  { ml: 12, gap: 5, w: 161, text: 'seanpm2001/SeansLif…', icon: <InkMark size={16} /> },
];

const navItems: { text: string; w: number; mr: number; gap: number; art: ReactNode }[] = [
  { text: 'Video Tools', w: 67, mr: 28, gap: 9, art: <><rect x=".7" y="1.300" width="15.600" height="13.400" rx="3" /><path d="M7 5.500v5l4-2.500z" fill="#fff" stroke="none" /></> },
  { text: 'Audio Tools', w: 67, mr: 29, gap: 7, art: <path d="M1.500 7v2M4 4.500v7M6.500 6v4M9 1.500v13M11.500 4v8M14 6.500v3" /> },
  { text: 'PDF Tools', w: 58, mr: 29, gap: 7, art: <path d="M2 3a2 2 0 0 1 2-2h5l5 5v7a2 2 0 0 1-2 2H4a2 2 0 0 1-2-2zM8.500 1v4.500H14" /> },
  { text: 'Converters', w: 65, mr: 29, gap: 9, art: <><path d="M6.800 1.500A6.700 6.700 0 0 0 4 13M1.500 13.500h3v-3M10.200 14.500A6.700 6.700 0 0 0 13 3M15.500 2.500h-3v3M9.500 1.300l1.500.4M7.500 14.700L6 14.300" /><circle cx="8.500" cy="8" r="1.200" fill="#fff" stroke="none" /></> },
  { text: 'Utilities', w: 44, mr: 0, gap: 7.500, art: <path d="M2 15L8 8.500M15 1.500l-3 1-.5 2.500L9.500 7M12 5l2.500-1M3 1.500L4.500 3l1 2L13.500 14l1 1M3.500 5L2 3.500M12 10.500l-1.500 1.500M5 9.500L1.500 13" /> },
];

const Chevron = ({ w = 9.500, sw = 1.100 }: { w?: number; sw?: number }) => (
  <svg width={w} height={w * 0.6} viewBox="0 0 10 6" fill="none" stroke="#fff" strokeWidth={sw}><path d="M1 1l4 4 4-4" /></svg>
);

const features: { title: string; w: number; c: string; lines: [string, number][] }[] = [
  { title: 'Online Video Cutter', w: 151, c: '#ffe680', lines: [['This web app comes in handy', 201], ['when you need to cut a small', 199.500], ['video file. It does not require', 190.500], ['installation, and it works in your', 213.500], ['browser.', 57]] },
  { title: 'Crop video', w: 83, c: '#ffab98', lines: [['Cropping allows you to frame', 198], ['the video to the desired area or', 211.500], ['change frame proportions.', 180]] },
  { title: 'Rotate video', w: 98, c: '#7fd3ff', lines: [['You can rotate your video 90,', 198], ['180 or 270 degrees. It can be', 195.500], ['useful when a portrait scene', 194], ['was shot in a landscape mode', 204.500], ['or vice versa.', 89]] },
  { title: 'Any format you can think of', w: 214, c: '#ffe680', lines: [['The app supports almost every', 209], ['video format out there. If your', 202], ['file fails to open, then it is', 172], ['probably damaged or it is too', 197], ['big.', 24.500]] },
  { title: 'Easy video trimming', w: 157.500, c: '#ffab98', lines: [['After uploading your file, you', 194], ['can choose the quality and', 183.500], ['format of the output file. There', 207.500], ['are no complicated controls —', 203], ['every feature is just one or two', 209.500], ['clicks away.', 80]] },
  { title: 'Security guaranteed', w: 159, c: '#7fd3ff', lines: [['Your files are automatically', 181.500], ['deleted from our servers a few', 207], ['hours after you are done', 167], ['working with them. Nobody has', 214.500], ['access to them except you.', 187]] },
];

const ClassicFirefox = () => (
  <Svg viewBox="0 0 48 48" $s={48}>
    <defs>
      <linearGradient id="glb" x1="0" y1="0" x2=".6" y2="1"><stop offset="0" stopColor="#2bb5e0" /><stop offset=".5" stopColor="#1a6aa5" /><stop offset="1" stopColor="#0d2f60" /></linearGradient>
      <linearGradient id="fox" x1=".9" y1=".1" x2=".4" y2="1"><stop offset="0" stopColor="#ffe600" /><stop offset=".45" stopColor="#fba41e" /><stop offset="1" stopColor="#ef5a2b" /></linearGradient>
    </defs>
    <circle cx="24" cy="24" r="24" fill="url(#fox)" />
    <path d="M5 10C10 3 18 0 25 0c8 0 13 4 15 10l-1 14c-2 8-8 12-14 12L8 27z" fill="url(#glb)" />
    <path d="M35 4c3 4 6 9 6 14 0 2 0 4-1 6-1-3-2-5-4-6z" fill="#123f75" />
    <path d="M0 27C-1 19 1 14 3 12c0-3 0-5 1-7 1 1 2 3 2 5 3-1 6-1 8 0 1-2 3-4 5-4-2 3-2 5-1 7l4 2c-1 3-4 3-7 5-1 1-2 3-2 5 3 2 7 0 10 1 3 0 6 3 3 4-3-1-4 2-7 3-2 1-4 0-4-1 2 4 8 5 13 2 7-3 9-9 9-15 5 15-4 26-17 26C10 44 1 38 0 27z" fill="#f4783c" />
  </Svg>
);

export default function App() {
  return (
    <Screen>
      <Global />
      <SystemBar>
        <SystemLeft>
          <Fit w={62}>Activities</Fit>
          <AppMenu><Firefox s={15} mono /><Fit w={138}>Firefox Web Browser</Fit></AppMenu>
        </SystemLeft>
        <Fit w={120}>Fri Aug 5  18:46:36</Fit>
        <SystemRight>
          <Cones>{[0, 1, 2, 3].map((i) => <Vlc key={i} />)}</Cones>
          <StatusIcons>
            <Svg viewBox="0 0 16 16"><path d="M.5 5C4.500.5 11.500.5 15.500 5L8 14.500z" fill="#777" /><path d="M2.200 6.500c3-3.500 8.600-3.500 11.600 0L8 14.500z" fill="#fff" /><path d="M.8 4.800c4-4 10.400-4 14.400 0" stroke="#fff" strokeWidth="1.300" /></Svg>
            <Svg viewBox="0 0 16 16"><path d="M1 5.500h2.500L8 2v12l-4.500-3.500H1z" fill="#f3f3f3" /><path d="M10 5.500c1.500 1.500 1.500 3.500 0 5M12 3.500c2.500 2.500 2.500 6.500 0 9" stroke="#888" strokeWidth="1.200" /></Svg>
            <svg width="16" height="16" viewBox="0 0 16 16" fill="none"><path d="M3.500 3L.5 8.500h2L1.500 13l3.500-6H3z" fill="#fff" /><rect x="6.800" y="1.800" width="8.400" height="13.400" rx="1.500" stroke="#fff" strokeWidth="1.300" /><path d="M9 .5h4" stroke="#fff" /><path d="M8 7h6v7H8z" fill="#4e9a06" /></svg>
          </StatusIcons>
          <Fit w={31}>66 %</Fit>
        </SystemRight>
      </SystemBar>

      <TitleBar>
        <Title><Fit w={583}>Video Trimmer - Cut Video Online for Free - MP4, AVI, MPG, 3GP — Mozilla Firefox</Fit></Title>
        <WindowButtons>
          <WindowButton><svg width="10" height="10" stroke="#fff" strokeWidth="1.200"><path d="M1 8h8" /></svg></WindowButton>
          <WindowButton><svg width="10" height="10" fill="none" stroke="#fff"><path d="M1.500 3.500h5v5h-5z" /><path d="M3.500 1.500h5v5" stroke="#999" /></svg></WindowButton>
          <WindowButton><svg width="10" height="10" stroke="#fff" strokeWidth="1.300"><path d="M1 1l8 8M9 1L1 9" /></svg></WindowButton>
        </WindowButtons>
      </TitleBar>

      <Chrome>
        <ThemeArt />
        <MenuRow>
          {menus.map(([a, k, b, w]) => <Fit key={k} w={w}>{a}<u>{k}</u>{b}</Fit>)}
        </MenuRow>
        <TabRow>
          {Array.from({ length: 48 }, (_, i) => <Tab key={i} $dark={i === 1}>{tabs[i] ?? <FaGithub size={16} />}</Tab>)}
        </TabRow>
        <Toolbars>
          <AddressRow>
            <NavButtons>
              <Svg viewBox="0 0 16 16" stroke="#c8c8c8" strokeWidth="1.300"><path d="M15 8H1.500M7 2.500L1.500 8 7 13.500" /></Svg>
              <Svg viewBox="0 0 16 16" stroke="#9c9c9c" strokeWidth="1.300"><path d="M1 8h13.500M9 2.500L14.500 8 9 13.500" /></Svg>
              <Svg viewBox="0 0 16 16" stroke="#c8c8c8" strokeWidth="1.300"><path d="M14.500 9A6.500 6.500 0 1 1 12.500 3.500L14 5M14.500 1v4.500H10" /></Svg>
            </NavButtons>
            <UrlField>
              <Svg viewBox="0 0 16 16" stroke="#28282c" strokeWidth="1.300"><path d="M8 .8l6.500 2.700C14.500 9 12.500 13 8 15.300 3.500 13 1.500 9 1.500 3.500z" strokeLinejoin="round" /></Svg>
              <Gap $w={12} />
              <Svg viewBox="0 0 16 16" stroke="#28282c" strokeWidth="1.400"><rect x="2.500" y="7" width="11" height="8" rx="1.500" /><path d="M4.800 7V4.200a3.200 3.200 0 0 1 6.400 0V7" /></Svg>
              <UrlText><Fit w={219}><span>https://</span>online-video-cutter.com</Fit></UrlText>
              <Svg viewBox="0 0 16 16" stroke="#202024" strokeWidth="1.400"><path strokeLinejoin="round" d="M8 1l2.100 4.600 5 .6-3.700 3.400 1 5L8 12.100l-4.400 2.500 1-5L.9 6.200l5-.6z" /></Svg>
            </UrlField>
            <Actions>
              <Svg viewBox="0 0 16 16" stroke="#c8c8c8" strokeWidth="1.400"><path d="M2.500 2h11A1.300 1.300 0 0 1 14.800 3.300v4.400c0 9-13.600 9-13.600 0V3.300A1.300 1.300 0 0 1 2.500 2z" /><path d="M4.800 6L8 9l3.200-3" strokeWidth="1.600" /></Svg>
              <Svg viewBox="0 0 16 16" stroke="#10d0f8" strokeWidth="1.500"><path d="M8 0v10M4 6.500L8 10.500l4-4M1.500 11.500v1a2 2 0 0 0 2 2h9a2 2 0 0 0 2-2v-1" /></Svg>
              <Badged>
                <Svg viewBox="0 0 16 16"><path d="M8 .5c2 1.500 4 2 6.500 2 0 7-1 10-6.500 13C2.500 12.500 1.500 9.500 1.500 2.500c2.500 0 4.500-.5 6.500-2z" fill="#860a12" /><path d="M4 6v3c0 2 3 2 3 0V6m0 3c0 2 4 2 4-.5S8.500 6 8.500 8.500" stroke="#fff" strokeWidth="1.100" /></Svg>
                <Badge>4</Badge>
              </Badged>
              <Svg viewBox="0 0 16 16" stroke="#d0d0d0" strokeWidth="1.300"><path d="M2 3.500h12M2 8h12M2 12.500h12" /></Svg>
            </Actions>
          </AddressRow>
          <Bookmarks>
            {marks.map((m) => (
              <Bookmark key={m.text} $ml={m.ml} $gap={m.gap}>{m.icon}<Fit w={m.w}>{m.text}</Fit></Bookmark>
            ))}
          </Bookmarks>
        </Toolbars>
      </Chrome>

      <Page>
        <SiteNav>
          <Logo>
            <svg width="18" height="18" viewBox="0 0 18 18"><circle cx="4" cy="13.500" r="4" fill="#ffd02e" /><circle cx="14" cy="13.500" r="4" fill="#ff5722" /><circle cx="14" cy="4" r="4" fill="#0aa4f5" /></svg>
            <Fit w={81}>123APPS</Fit>
          </Logo>
          {navItems.map((n) => (
            <NavItem key={n.text} $mr={n.mr}>
              <svg width="17" height="16" viewBox="0 0 17 16" fill="none" stroke="#fff" strokeWidth="1.100">{n.art}</svg>
              <Gap $w={n.gap} />
              <Fit w={n.w}>{n.text}</Fit>
              <Gap $w={4.500} />
              <Chevron />
            </NavItem>
          ))}
          <LogIn><Fit w={33}>Log in</Fit></LogIn>
        </SiteNav>

        <Hero>
          <HeroTitle><Fit w={253}>Trim Video</Fit></HeroTitle>
          <HeroSub><Fit w={258}>Trim or cut video of any format</Fit></HeroSub>
          <OpenButton>
            <OpenLabel><Fit w={75}>Open file</Fit></OpenLabel>
            <OpenMore><Chevron w={11} sw={1.800} /></OpenMore>
          </OpenButton>
          <Drop>
            <svg width="20" height="18" viewBox="0 0 20 18" fill="none" stroke="#777" strokeWidth="1.100"><path d="M10 .5v12M5.500 8.500L10 12.500l4.500-4M1 11.500v3a2.500 2.500 0 0 0 2.500 2.500h13a2.500 2.500 0 0 0 2.500-2.500v-3" /></svg>
            <Fit w={90.500}>or drop file here</Fit>
          </Drop>
        </Hero>

        <Features>
          {features.map((f) => (
            <Feature key={f.title}>
              <FeatureTitle $c={f.c}><Fit w={f.w}>{f.title}</Fit></FeatureTitle>
              <Lines>{f.lines.map(([t, w]) => <Fit key={t} w={w}>{t}</Fit>)}</Lines>
            </Feature>
          ))}
        </Features>

        <Popup>
          <ClassicFirefox />
          <PopupBody>
            <Phrase><Fit w={25}>Our</Fit><Fit w={154.500}><b>extension for Firefox</b></Fit><Fit w={11.500}>is</Fit></Phrase>
            <Phrase><Fit w={94.500}>now available</Fit></Phrase>
            <Install><Fit w={42}>Install</Fit></Install>
          </PopupBody>
          <PopupClose><svg width="10" height="10" stroke="#222" strokeWidth="1.200"><path d="M1 1l8 8M9 1L1 9" /></svg></PopupClose>
        </Popup>
      </Page>

      <Desktop>
        <Dock>
          {dock.map((d, i) => (
            <DockItem key={i} $on={d.on}>
              <div><DockGlyph index={i} art={d.art} /></div>
              <Dots>{Array.from({ length: d.n ?? 0 }, (_, k) => <i key={k} />)}</Dots>
            </DockItem>
          ))}
          <Divider />
          <DockItem>
            <div><Svg viewBox="0 0 16 16"><rect x="1.500" y="1" width="13" height="14.500" rx="1" fill="#d9d7d4" /><path d="M3 1.500h10v2H3z" fill="#fff" stroke="#777" strokeWidth=".5" /><path d="M6 8.500L8 6l2 2.500M11 9.500l1 2.500H9M7 12H4.500l1-3" stroke="#3f9a26" strokeWidth="1.600" /></Svg></div>
            <Dots><i /></Dots>
          </DockItem>
          <DockItem>
            <div><Svg viewBox="0 0 16 16">{[3, 8, 13].map((x) => [3, 8, 13].map((y) => <rect key={x + '-' + y} x={x - 1} y={y - 1} width="2" height="2" fill="#f2f2f2" />))}</Svg></div>
          </DockItem>
        </Dock>
      </Desktop>
    </Screen>
  );
}
